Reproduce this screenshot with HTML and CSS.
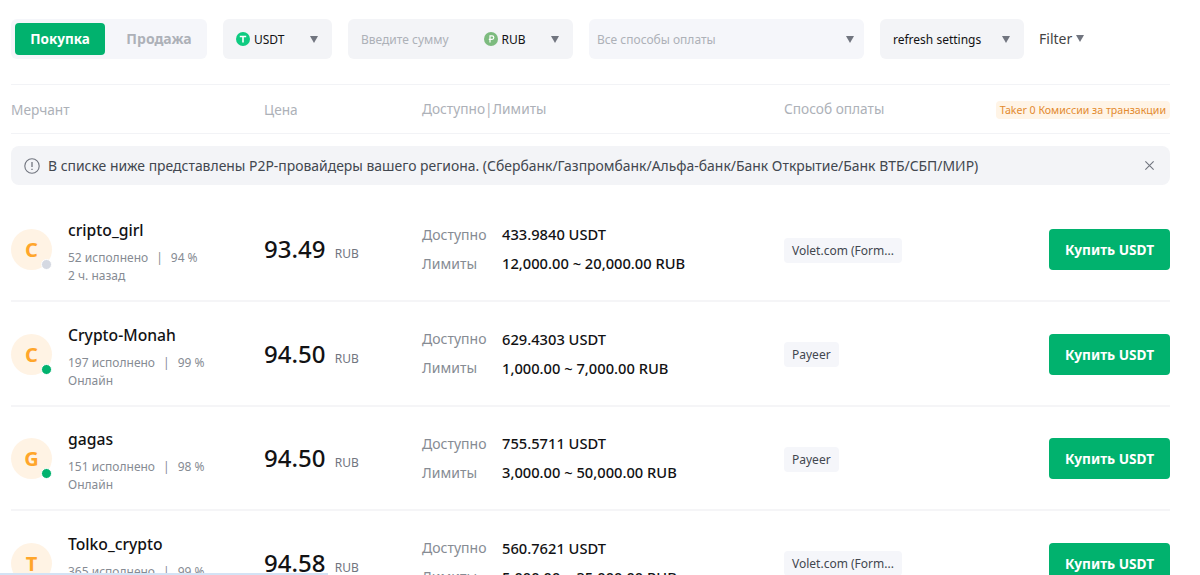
FILE: index.html
```html
<!DOCTYPE html>
<html lang="ru">

<head>
  <meta charset="UTF-8">
  <meta name="viewport" content="width=device-width, initial-scale=1.0">
  <title>P2P</title>
  <link rel="stylesheet" href="styles.css">
</head>

<body>
  <div class="container">
    <div class="filters">
      <div class="tabs">
        <button class="tab active">Покупка</button>
        <button class="tab">Продажа</button>
      </div>
      <div class="select select-coin">
        <svg class="coin" viewBox="0 0 14 14"><circle cx="7" cy="7" r="7" fill="#0ecb81"/><path d="M3.8 3.8h6.4v1.4H7.8v5.4H6.2V5.2H3.8z" fill="#fff"/></svg>
        <span class="value">USDT</span>
        <span class="arrow"></span>
      </div>
      <div class="select select-amount">
        <span class="placeholder">Введите сумму</span>
        <svg class="coin coin-rub" viewBox="0 0 14 14"><circle cx="7" cy="7" r="7" fill="#7dbb7f"/><path d="M6 10.5V3.8h2a1.7 1.7 0 0 1 0 3.6H4.8" fill="none" stroke="#fff" stroke-width="1.2"/></svg>
        <span class="value">RUB</span>
        <span class="arrow"></span>
      </div>
      <div class="select select-pay">
        <span class="placeholder">Все способы оплаты</span>
        <span class="arrow arrow-low"></span>
      </div>
      <div class="select select-refresh">
        <span class="value">refresh settings</span>
        <span class="arrow"></span>
      </div>
      <div class="filter-btn">Filter <span class="arrow arrow-small"></span></div>
    </div>

    <div class="table-head">
      <div class="col-merchant">Мерчант</div>
      <div class="col-price">Цена</div>
      <div class="col-limits">Доступно|Лимиты</div>
      <div class="col-pay">Способ оплаты</div>
      <div class="col-action"><span class="fee">Taker 0 Комиссии за транзакции</span></div>
    </div>

    <div class="notice">
      <svg class="notice-icon" viewBox="0 0 16 16"><circle cx="8" cy="8" r="7.2" fill="none" stroke="#71757f" stroke-width="1.1"/><path d="M8 4v5M8 10.8v1.3" stroke="#71757f" stroke-width="1.3"/></svg>
      <span class="notice-text">В списке ниже представлены P2P-провайдеры вашего региона. (Сбербанк/Газпромбанк/Альфа-банк/Банк Открытие/Банк ВТБ/СБП/МИР)</span>
      <svg class="notice-close" viewBox="0 0 12 12"><path d="M1.5 1.5l9 9M10.5 1.5l-9 9" stroke="#71757f" stroke-width="1.2"/></svg>
    </div>

    <div class="row">
      <div class="col-merchant merchant">
        <div class="avatar">C<span class="status"></span></div>
        <div class="merchant-info">
          <div class="name">cripto_girl</div>
          <div class="stats">52 исполнено<span class="sep">|</span>94 %</div>
          <div class="stats">2 ч. назад</div>
        </div>
      </div>
      <div class="col-price price">93.49 <span class="currency">RUB</span></div>
      <div class="col-limits">
        <div class="line"><span class="line-label">Доступно</span><span>433.9840 USDT</span></div>
        <div class="line"><span class="line-label">Лимиты</span><span>12,000.00 ~ 20,000.00 RUB</span></div>
      </div>
      <div class="col-pay"><span class="tag">Volet.com (Form...</span></div>
      <div class="col-action"><button class="buy">Купить USDT</button></div>
    </div>

    <div class="row">
      <div class="col-merchant merchant">
        <div class="avatar">C<span class="status online"></span></div>
        <div class="merchant-info">
          <div class="name">Crypto-Monah</div>
          <div class="stats">197 исполнено<span class="sep">|</span>99 %</div>
          <div class="stats">Онлайн</div>
        </div>
      </div>
      <div class="col-price price">94.50 <span class="currency">RUB</span></div>
      <div class="col-limits">
        <div class="line"><span class="line-label">Доступно</span><span>629.4303 USDT</span></div>
        <div class="line"><span class="line-label">Лимиты</span><span>1,000.00 ~ 7,000.00 RUB</span></div>
      </div>
      <div class="col-pay"><span class="tag">Payeer</span></div>
      <div class="col-action"><button class="buy">Купить USDT</button></div>
    </div>

    <div class="row">
      <div class="col-merchant merchant">
        <div class="avatar">G<span class="status online"></span></div>
        <div class="merchant-info">
          <div class="name">gagas</div>
          <div class="stats">151 исполнено<span class="sep">|</span>98 %</div>
          <div class="stats">Онлайн</div>
        </div>
      </div>
      <div class="col-price price">94.50 <span class="currency">RUB</span></div>
      <div class="col-limits">
        <div class="line"><span class="line-label">Доступно</span><span>755.5711 USDT</span></div>
        <div class="line"><span class="line-label">Лимиты</span><span>3,000.00 ~ 50,000.00 RUB</span></div>
      </div>
      <div class="col-pay"><span class="tag">Payeer</span></div>
      <div class="col-action"><button class="buy">Купить USDT</button></div>
    </div>

    <div class="row">
      <div class="col-merchant merchant">
        <div class="avatar">T<span class="status online"></span></div>
        <div class="merchant-info">
          <div class="name">Tolko_crypto</div>
          <div class="stats">365 исполнено<span class="sep">|</span>99 %</div>
          <div class="stats">Онлайн</div>
        </div>
      </div>
      <div class="col-price price">94.58 <span class="currency">RUB</span></div>
      <div class="col-limits">
        <div class="line"><span class="line-label">Доступно</span><span>560.7621 USDT</span></div>
        <div class="line"><span class="line-label">Лимиты</span><span>5,000.00 ~ 35,000.00 RUB</span></div>
      </div>
      <div class="col-pay"><span class="tag">Volet.com (Form...</span></div>
      <div class="col-action"><button class="buy">Купить USDT</button></div>
    </div>
  </div>

  <div class="page-edge"></div>
</body>

</html>
```

FILE: styles.css
```css
html,
body {
  height: 100%;
  overflow: hidden;
}

body {
  margin: 0;
  font-family: "Noto Sans", Arial, sans-serif;
  color: #121214;
  background-color: #fff;
}

.container {
  width: 1159px;
  margin-left: 11px;
}

/* filters */
.filters {
  display: flex;
  align-items: center;
  gap: 16px;
  height: 85px;
  padding-bottom: 7px;
  box-sizing: border-box;
  border-bottom: 1px solid #f2f3f6;
  width: 1159px;
}

.tabs {
  display: flex;
  align-items: center;
  width: 196px;
  height: 40px;
  padding-left: 4px;
  box-sizing: border-box;
  background-color: #f5f6fa;
  border-radius: 6px;
}

.tab {
  width: 90px;
  height: 32px;
  border: none;
  border-radius: 4px;
  background: none;
  font-family: inherit;
  font-size: 14px;
  font-weight: 700;
  color: #adb1b8;
  padding: 0;
}

.tab + .tab {
  margin-left: 6px;
  width: 96px;
}

.tab.active {
  background-color: #01b26e;
  color: #fff;
  font-size: 13.5px;
}

.select {
  display: flex;
  align-items: center;
  height: 40px;
  box-sizing: border-box;
  border-radius: 6px;
  background-color: #f3f4f7;
  font-size: 12px;
  padding: 1px 14px 0 13px;
}

.select .arrow {
  margin-left: auto;
}

.select-coin {
  width: 109px;
}

.select-amount {
  width: 225px;
}

.select-pay {
  width: 275px;
  background-color: #f5f6fa;
  padding: 2px 10px 0 8px;
}

.select-refresh {
  width: 144px;
}

.coin {
  width: 14px;
  height: 14px;
  margin-right: 4px;
}

.coin-rub {
  margin-left: 35px;
}

.placeholder {
  color: #adb1b8;
}

.arrow {
  display: inline-block;
  width: 0;
  height: 0;
  border-left: 4.5px solid transparent;
  border-right: 4.5px solid transparent;
  border-top: 7px solid #71757f;
}

.arrow-small {
  border-left-width: 4px;
  border-right-width: 4px;
  border-top-width: 7px;
  vertical-align: 2px;
}

.filter-btn {
  font-size: 14px;
  color: #444;
  margin-left: -1px;
}

/* table */
.table-head {
  display: flex;
  align-items: center;
  height: 49px;
  box-sizing: border-box;
  border-bottom: 1px solid #f2f3f6;
  font-size: 13.7px;
  color: #adb1b8;
}

.col-merchant {
  width: 253px;
}

.col-price {
  width: 158px;
}

.col-limits {
  width: 362px;
}

.col-pay {
  width: 210px;
}

.col-action {
  flex: 1;
  display: flex;
  justify-content: flex-end;
}

.fee {
  margin-top: 1px;
  padding: 2px 4px;
  border-radius: 4px;
  background-color: #fff4e6;
  color: #e38a2e;
  font-size: 10.6px;
  white-space: nowrap;
}

.notice {
  display: flex;
  align-items: center;
  height: 39px;
  margin-top: 12px;
  margin-bottom: 12.5px;
  padding: 0 15px 0 13px;
  border-radius: 8px;
  background-color: #f3f4f7;
  font-size: 13.93px;
  color: #42474f;
}

.notice-icon {
  width: 16px;
  height: 16px;
  margin-right: 8px;
}

.notice-text {
  flex: 1;
  white-space: nowrap;
}

.notice-close {
  width: 11px;
  height: 11px;
}

.row {
  display: flex;
  align-items: center;
  height: 104.5px;
  padding-top: 2px;
  box-sizing: border-box;
  border-bottom: 2px solid #f5f5f7;
}

.merchant {
  display: flex;
  align-items: center;
  gap: 16px;
}

.merchant-info {
  padding-top: 6px;
}

.avatar {
  position: relative;
  display: flex;
  align-items: center;
  justify-content: center;
  flex-shrink: 0;
  width: 41px;
  height: 41px;
  border-radius: 50%;
  background-color: #fff3e4;
  color: #ffa62b;
  font-size: 20px;
  font-weight: 700;
}

.status {
  position: absolute;
  right: 0;
  bottom: 0;
  width: 9px;
  height: 9px;
  border: 1px solid #fff;
  border-radius: 50%;
  background-color: #d5d9e2;
}

.status.online {
  background-color: #01b26e;
}

.name {
  font-size: 15.7px;
  font-weight: 500;
  margin-bottom: 9px;
  line-height: 20px;
}

.stats {
  font-size: 12px;
  line-height: 18px;
  color: #868b93;
}

.sep {
  margin: 0 8px;
}

.price {
  padding-bottom: 2px;
  font-size: 24px;
  font-weight: 500;
}

.currency {
  margin-left: 3px;
  font-size: 12px;
  font-weight: 400;
  color: #71757f;
}

.col-limits,
.col-pay {
  padding-bottom: 2px;
}

.line {
  display: flex;
  align-items: center;
  height: 29px;
  font-size: 14.7px;
  font-weight: 500;
}

.line-label {
  width: 80px;
  color: #868b93;
  font-size: 14px;
  font-weight: 400;
}

.tag {
  padding: 4px 8px;
  border-radius: 4px;
  background-color: #f5f6fa;
  color: #42474f;
  font-size: 12px;
}

.buy {
  width: 121px;
  height: 41px;
  border: none;
  border-radius: 4px;
  background-color: #01b26e;
  color: #fff;
  font-family: inherit;
  font-size: 13.7px;
  font-weight: 700;
  padding: 0;
}

.page-edge {
  position: fixed;
  left: 0;
  bottom: 0;
  width: 328px;
  height: 2px;
  background-color: #d3e3f5;
}
```
